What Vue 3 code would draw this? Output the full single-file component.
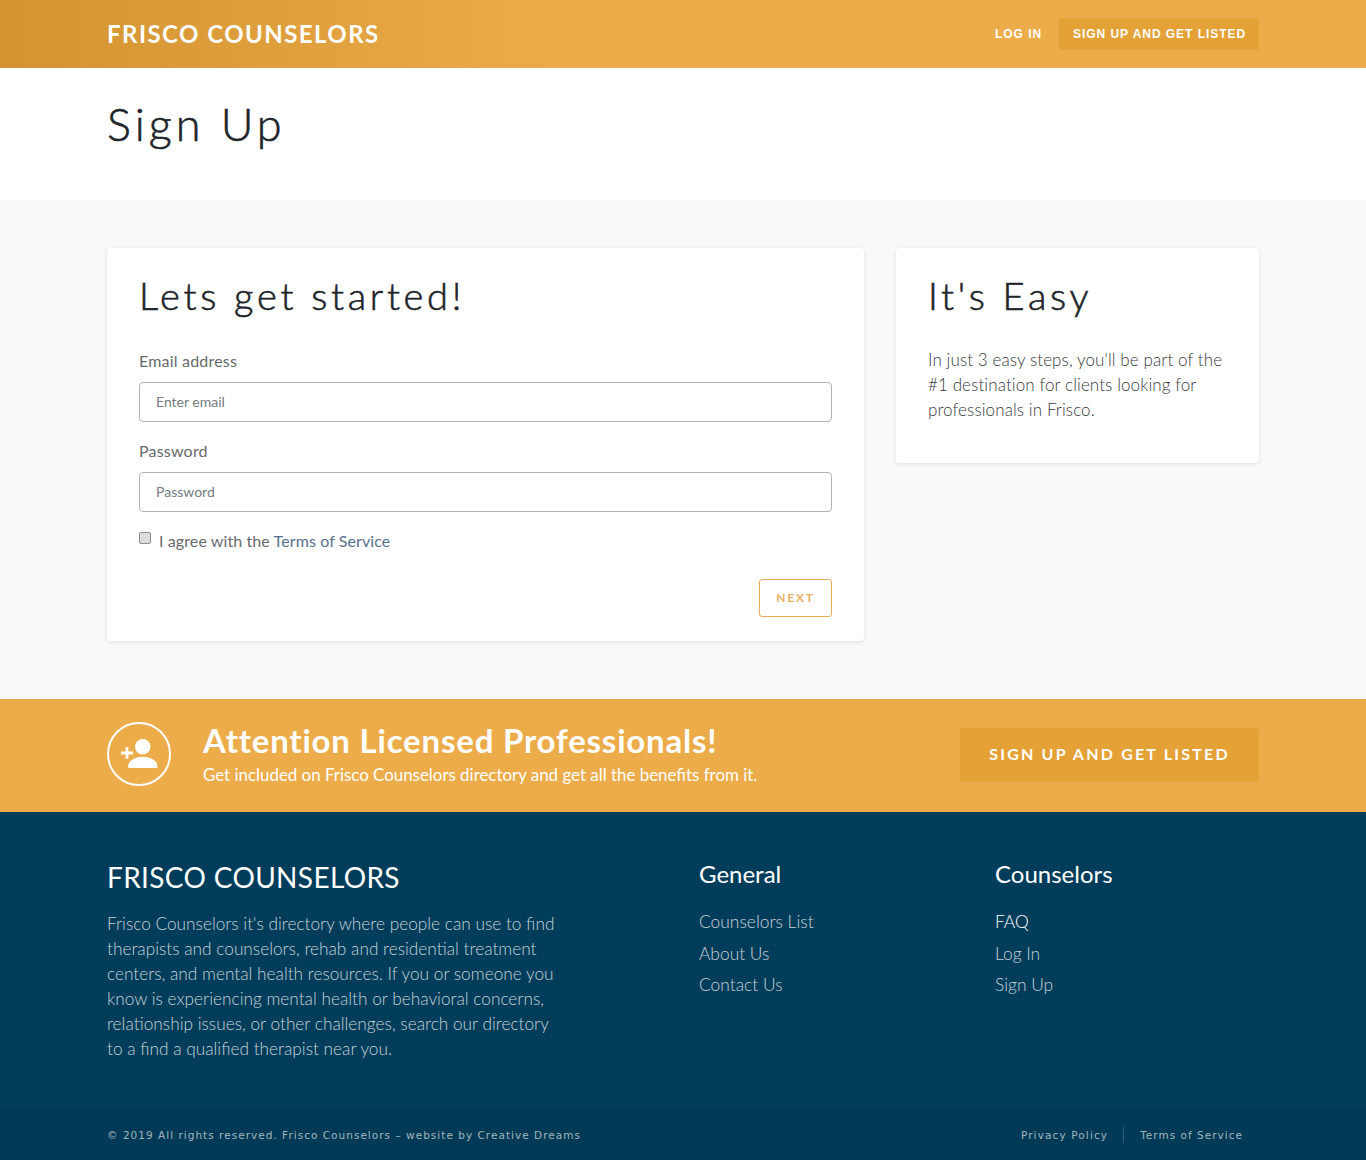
<script setup>
const generalLinks = ["Counselors List", "About Us", "Contact Us"]
const counselorLinks = ["FAQ", "Log In", "Sign Up"]
</script>

<template>
  <div class="page">
    <header class="topbar">
      <div class="container topbar-inner">
        <a class="brand">FRISCO COUNSELORS</a>
        <nav class="topnav">
          <a class="login">LOG IN</a>
          <a class="signup">SIGN UP AND GET LISTED</a>
        </nav>
      </div>
    </header>

    <section class="title-band">
      <div class="container">
        <h1>Sign Up</h1>
      </div>
    </section>

    <main class="content">
      <div class="container content-grid">
        <form class="card form-card" @submit.prevent>
          <h2>Lets get started!</h2>
          <label class="field-label">Email address</label>
          <input class="field" type="email" placeholder="Enter email" />
          <label class="field-label second">Password</label>
          <input class="field" type="password" placeholder="Password" />
          <label class="agree">
            <input type="checkbox" />
            <span>I agree with the <a>Terms of Service</a></span>
          </label>
          <div class="actions">
            <button class="next">NEXT</button>
          </div>
        </form>
        <aside class="card side-card">
          <h2>It's Easy</h2>
          <p>In just 3 easy steps, you'll be part of the #1 destination for clients looking for professionals in Frisco.</p>
        </aside>
      </div>
    </main>

    <section class="cta">
      <div class="container cta-inner">
        <svg class="cta-icon" width="64" height="64" viewBox="0 0 64 64">
          <circle cx="32" cy="32" r="31" stroke="#fff" stroke-width="2" fill="none" />
          <circle cx="35.700" cy="24.700" r="7.700" fill="#fff" />
          <path d="M21.300 46v-2.500c0-5.500 8-8.800 14.500-8.800s14.500 3.300 14.500 8.800V46z" fill="#fff" />
          <path d="M14 31h12M20 25.200v11.600" stroke="#fff" stroke-width="2.800" fill="none" />
        </svg>
        <div class="cta-text">
          <h3>Attention Licensed Professionals!</h3>
          <p>Get included on Frisco Counselors directory and get all the benefits from it.</p>
        </div>
        <a class="cta-button">SIGN UP AND GET LISTED</a>
      </div>
    </section>

    <footer class="footer">
      <div class="container footer-grid">
        <div class="about">
          <h4>FRISCO COUNSELORS</h4>
          <p>Frisco Counselors it's directory where people can use to find therapists and counselors, rehab and residential treatment centers, and mental health resources. If you or someone you know is experiencing mental health or behavioral concerns, relationship issues, or other challenges, search our directory to a find a qualified therapist near you.</p>
        </div>
        <div class="links">
          <h5>General</h5>
          <a v-for="link in generalLinks" :key="link">{{ link }}</a>
        </div>
        <div class="links">
          <h5>Counselors</h5>
          <a v-for="link in counselorLinks" :key="link" :class="{ active: link === 'FAQ' }">{{ link }}</a>
        </div>
      </div>
    </footer>

    <div class="legal">
      <div class="container legal-inner">
        <span>© 2019 All rights reserved. Frisco Counselors – website by Creative Dreams</span>
        <div class="legal-links">
          <a>Privacy Policy</a>
          <a class="divided">Terms of Service</a>
        </div>
      </div>
    </div>
  </div>
</template>

<style>
body {
  background: #fff;
}
</style>

<style scoped>
.page {
  font-family: "Lato", "Noto Sans", sans-serif;
  color: #212529;
  width: 1366px;
}

.container {
  width: 1152px;
  margin: 0 auto;
}

.topbar {
  height: 68px;
  background: linear-gradient(90deg, #d29330 0%, #edac4a 42%);
}

.topbar-inner {
  height: 100%;
  display: flex;
  align-items: center;
  justify-content: space-between;
}

.brand {
  color: #fff;
  font-size: 24px;
  font-weight: 700;
  letter-spacing: 1.450px;
  margin-top: -1px;
}

.topnav {
  display: flex;
  align-items: center;
  gap: 17px;
}

.login,
.signup {
  color: #fff;
  font-family: "Liberation Sans", sans-serif;
  font-size: 12px;
  font-weight: 700;
  letter-spacing: 0.950px;
}

.signup {
  background: #e3a136;
  border-radius: 3px;
  height: 32px;
  line-height: 32px;
  padding: 0 13px 0 14px;
}

.title-band {
  height: 132px;
  background: #fff;
}

h1 {
  margin: 0;
  padding-top: 29px;
  font-size: 45px;
  line-height: 54px;
  font-weight: 300;
  letter-spacing: 4px;
  -webkit-text-stroke: 0.6px #212529;
}

.content {
  background: #f9f9f9;
  padding: 48px 0 58px;
}

.content-grid {
  display: grid;
  grid-template-columns: 757px 363px;
  gap: 32px;
  align-items: start;
}

.card {
  background: #fff;
  border-radius: 4px;
  box-shadow: 0 1px 4px rgba(0, 0, 0, 0.1);
  padding: 32px;
}

.card h2 {
  margin: 0;
  font-size: 38px;
  line-height: 30px;
  font-weight: 300;
  letter-spacing: 3.700px;
  -webkit-text-stroke: 0.6px #212529;
}

.form-card {
  height: 393px;
  box-sizing: border-box;
  display: flex;
  flex-direction: column;
}

.field-label {
  font-size: 16px;
  line-height: 24px;
  color: #666a6d;
  letter-spacing: 0.200px;
  margin-top: 39px;
  margin-bottom: 9px;
}

.field-label.second {
  margin-top: 17px;
}

.field {
  flex: none;
  box-sizing: border-box;
  width: 100%;
  height: 40px;
  border: 1px solid #b3b3b3;
  border-radius: 4px;
  padding: 0 16px 2px;
  font-family: inherit;
  font-size: 14px;
  background: #fff;
  outline: none;
}

.field::placeholder {
  color: #757b80;
  opacity: 1;
}

.agree {
  display: flex;
  align-items: flex-start;
  margin-top: 17px;
  font-size: 16px;
  line-height: 24px;
  letter-spacing: 0.100px;
  color: #666a6d;
}

.agree input {
  appearance: none;
  box-sizing: border-box;
  width: 12px;
  height: 12px;
  margin: 3px 8px 0 0;
  background: #dcdcdc;
  border: 1px solid #8c8c8c;
  border-radius: 2px;
}

.agree a {
  color: #56708f;
}

.actions {
  display: flex;
  justify-content: flex-end;
  margin-top: 26px;
}

.next {
  box-sizing: border-box;
  width: 73px;
  height: 38px;
  padding: 0 0 2px;
  background: #fff;
  border: 1px solid #e9ae55;
  border-radius: 3px;
  color: #e9b265;
  font-family: inherit;
  font-size: 12px;
  font-weight: 700;
  letter-spacing: 1.800px;
}

.side-card {
  height: 215px;
  box-sizing: border-box;
}

.side-card p {
  margin: 37px 0 0;
  font-size: 17px;
  line-height: 25px;
  font-weight: 300;
  letter-spacing: 0.100px;
  color: #37393b;
}

.cta {
  height: 113px;
  background: #edac4a;
}

.cta-inner {
  height: 100%;
  display: flex;
  align-items: center;
}

.cta-icon {
  flex: none;
  margin-bottom: 3px;
}

.cta-text {
  margin-left: 32px;
  margin-bottom: 4px;
  flex: 1;
  color: #fff;
}

.cta-text h3 {
  margin: 0;
  font-size: 33px;
  line-height: 40px;
  font-weight: 700;
  letter-spacing: 0.800px;
}

.cta-text p {
  margin: 2px 0 0;
  font-size: 16.900px;
  line-height: 26px;
  font-weight: 400;
}

.cta-button {
  width: 299px;
  height: 54px;
  line-height: 52px;
  margin-bottom: 2px;
  text-align: center;
  background: #e3a136;
  border-radius: 3px;
  color: #fff;
  font-size: 16px;
  font-weight: 700;
  letter-spacing: 2.200px;
}

.footer {
  height: 296px;
  box-sizing: border-box;
  background: #003d5b;
  padding-top: 48px;
}

.footer-grid {
  display: grid;
  grid-template-columns: 592px 296px 264px;
}

.about h4 {
  margin: 0;
  color: #fff;
  font-size: 28px;
  line-height: 34px;
  font-weight: 400;
  letter-spacing: 0.350px;
}

.about p {
  margin: 17px 0 0;
  width: 455px;
  font-size: 17.250px;
  line-height: 25px;
  font-weight: 300;
  color: #c8d2d7;
}

.links {
  display: flex;
  flex-direction: column;
  align-items: flex-start;
}

.links h5 {
  margin: -1px 0 17px;
  color: #fff;
  font-size: 24px;
  line-height: 30px;
  font-weight: 400;
}

.links a {
  font-size: 17.400px;
  line-height: 31.500px;
  font-weight: 300;
  color: #c8d2d7;
}

.links a.active {
  color: #fff;
}

.legal {
  height: 52px;
  background: #003a56;
}

.legal-inner {
  height: 100%;
  display: flex;
  align-items: center;
  justify-content: space-between;
  font-family: "DejaVu Sans", sans-serif;
  font-size: 10.500px;
  letter-spacing: 1.020px;
  line-height: 18px;
  padding-top: 1px;
  box-sizing: border-box;
  color: #a3b5bf;
}

.legal-links {
  display: flex;
  align-items: center;
  padding-right: 16px;
}

.legal-links a:first-child {
  letter-spacing: 1.120px;
}

.divided {
  border-left: 1px solid #2f5f79;
  margin-left: 15px;
  padding-left: 16px;
  line-height: 16px;
}
</style>
